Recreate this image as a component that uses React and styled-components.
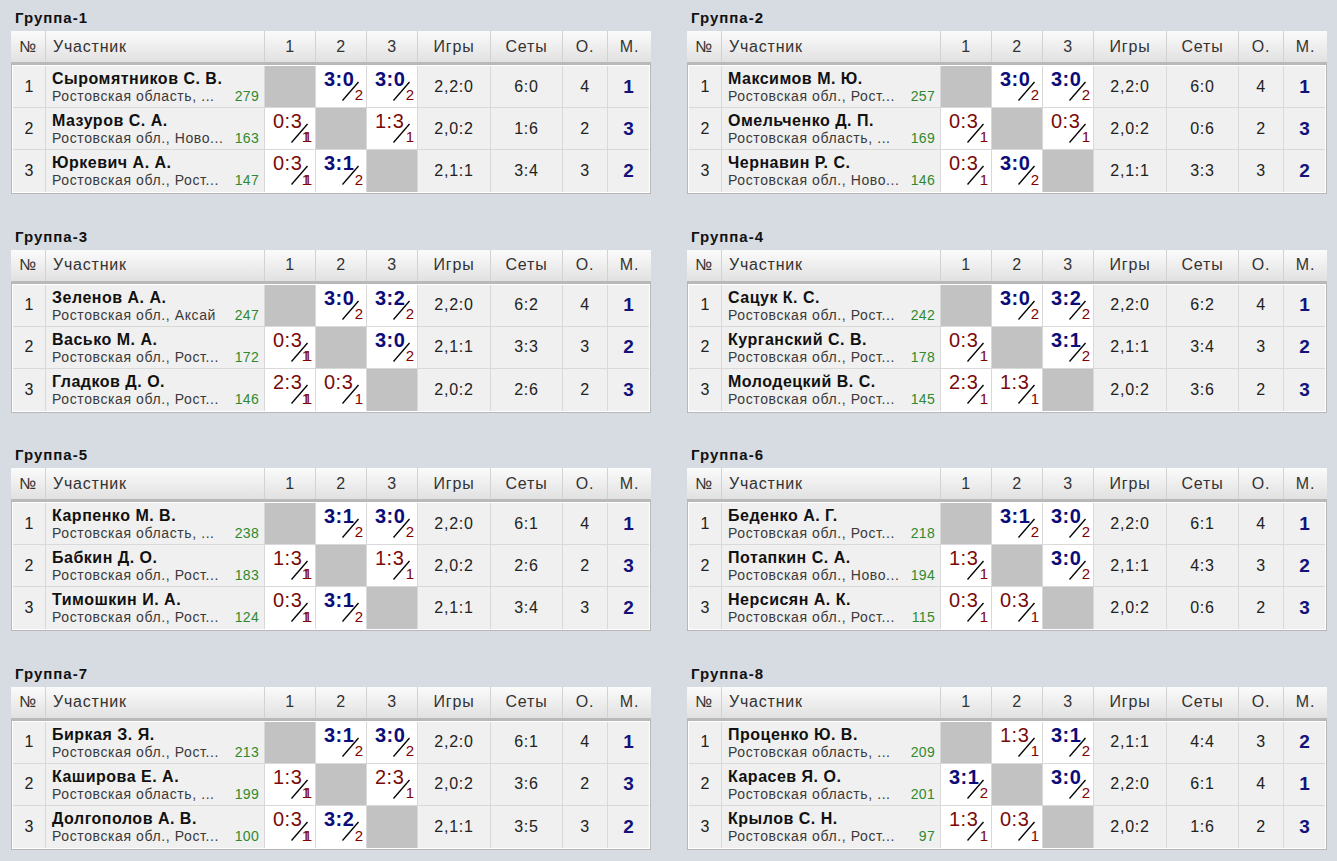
import styled, { createGlobalStyle } from "styled-components";

const GlobalStyle = createGlobalStyle`
  body {
    margin: 0;
    background: #d7dbe2;
    font-family: "Liberation Sans", Arial, sans-serif;
    color: #222;
  }
`;

// score format: "3:0/2", a trailing * marks the doubled point glyph
const groups = [
  {
    title: "Группа-1",
    rows: [
      ["Сыромятников С. В.", "Ростовская область, ...", 279, [null, "3:0/2", "3:0/2"], "2,2:0", "6:0", 4, 1],
      ["Мазуров С. А.", "Ростовская обл., Ново...", 163, ["0:3/1*", null, "1:3/1"], "2,0:2", "1:6", 2, 3],
      ["Юркевич А. А.", "Ростовская обл., Рост...", 147, ["0:3/1*", "3:1/2", null], "2,1:1", "3:4", 3, 2],
    ],
  },
  {
    title: "Группа-2",
    rows: [
      ["Максимов М. Ю.", "Ростовская обл., Рост...", 257, [null, "3:0/2", "3:0/2"], "2,2:0", "6:0", 4, 1],
      ["Омельченко Д. П.", "Ростовская область, ...", 169, ["0:3/1", null, "0:3/1"], "2,0:2", "0:6", 2, 3],
      ["Чернавин Р. С.", "Ростовская обл., Ново...", 146, ["0:3/1", "3:0/2", null], "2,1:1", "3:3", 3, 2],
    ],
  },
  {
    title: "Группа-3",
    rows: [
      ["Зеленов А. А.", "Ростовская обл., Аксай", 247, [null, "3:0/2", "3:2/2"], "2,2:0", "6:2", 4, 1],
      ["Васько М. А.", "Ростовская обл., Рост...", 172, ["0:3/1*", null, "3:0/2"], "2,1:1", "3:3", 3, 2],
      ["Гладков Д. О.", "Ростовская обл., Рост...", 146, ["2:3/1*", "0:3/1", null], "2,0:2", "2:6", 2, 3],
    ],
  },
  {
    title: "Группа-4",
    rows: [
      ["Сацук К. С.", "Ростовская обл., Рост...", 242, [null, "3:0/2", "3:2/2"], "2,2:0", "6:2", 4, 1],
      ["Курганский С. В.", "Ростовская обл., Рост...", 178, ["0:3/1", null, "3:1/2"], "2,1:1", "3:4", 3, 2],
      ["Молодецкий В. С.", "Ростовская обл., Рост...", 145, ["2:3/1", "1:3/1", null], "2,0:2", "3:6", 2, 3],
    ],
  },
  {
    title: "Группа-5",
    rows: [
      ["Карпенко М. В.", "Ростовская область, ...", 238, [null, "3:1/2", "3:0/2"], "2,2:0", "6:1", 4, 1],
      ["Бабкин Д. О.", "Ростовская обл., Рост...", 183, ["1:3/1*", null, "1:3/1"], "2,0:2", "2:6", 2, 3],
      ["Тимошкин И. А.", "Ростовская обл., Рост...", 124, ["0:3/1*", "3:1/2", null], "2,1:1", "3:4", 3, 2],
    ],
  },
  {
    title: "Группа-6",
    rows: [
      ["Беденко А. Г.", "Ростовская обл., Рост...", 218, [null, "3:1/2", "3:0/2"], "2,2:0", "6:1", 4, 1],
      ["Потапкин С. А.", "Ростовская обл., Ново...", 194, ["1:3/1", null, "3:0/2"], "2,1:1", "4:3", 3, 2],
      ["Нерсисян А. К.", "Ростовская обл., Рост...", 115, ["0:3/1", "0:3/1", null], "2,0:2", "0:6", 2, 3],
    ],
  },
  {
    title: "Группа-7",
    rows: [
      ["Биркая З. Я.", "Ростовская обл., Рост...", 213, [null, "3:1/2", "3:0/2"], "2,2:0", "6:1", 4, 1],
      ["Каширова Е. А.", "Ростовская область, ...", 199, ["1:3/1*", null, "2:3/1"], "2,0:2", "3:6", 2, 3],
      ["Долгополов А. В.", "Ростовская обл., Рост...", 100, ["0:3/1*", "3:2/2", null], "2,1:1", "3:5", 3, 2],
    ],
  },
  {
    title: "Группа-8",
    rows: [
      ["Проценко Ю. В.", "Ростовская область, ...", 209, [null, "1:3/1", "3:1/2"], "2,1:1", "4:4", 3, 2],
      ["Карасев Я. О.", "Ростовская область, ...", 201, ["3:1/2", null, "3:0/2"], "2,2:0", "6:1", 4, 1],
      ["Крылов С. Н.", "Ростовская обл., Рост...", 97, ["1:3/1", "0:3/1", null], "2,0:2", "1:6", 2, 3],
    ],
  },
];

const Page = styled.div`
  display: grid;
  grid-template-columns: 640px 640px;
  column-gap: 36px;
  row-gap: 32.6px;
  padding: 8px 0 20px 11px;
`;

const Group = styled.section`
  display: flex;
  flex-direction: column;
`;

const Title = styled.div`
  height: 20px;
  line-height: 20px;
  margin-bottom: 3px;
  padding-left: 4px;
  font-size: 15px;
  font-weight: bold;
  letter-spacing: 1px;
  color: #111;
`;

const HeadRow = styled.div`
  display: grid;
  grid-template-columns: 35px 219px 51px 51px 51px 73px 72px 45px 43px;
  height: 33px;
  box-sizing: border-box;
  background: linear-gradient(#fbfbfb, #e1e1e1);
  border-bottom: 2px solid #b9b9b9;
`;

const HeadCell = styled.div`
  display: flex;
  align-items: center;
  justify-content: ${({ $left }) => ($left ? "flex-start" : "center")};
  padding-left: ${({ $left }) => ($left ? "7px" : "0")};
  border-right: 1px solid #d2d2d2;
  font-size: 16px;
  letter-spacing: 0.8px;
  color: #333;

  &:last-child {
    border-right: none;
  }
`;

const Body = styled.div`
  border: 1px solid #b7b7b7;
  padding: 1px;
  background: #fff;
`;

const Row = styled.div`
  display: grid;
  grid-template-columns: 33px 219px 51px 51px 51px 73px 72px 45px 41px;
  height: 42px;

  & > * {
    box-sizing: border-box;
    border-right: 1px solid #d9d9d9;
    border-bottom: 1px solid #d9d9d9;
  }
  & > *:last-child {
    border-right: none;
  }
  &:last-child > * {
    border-bottom: none;
  }
`;

const NumCell = styled.div`
  display: flex;
  align-items: center;
  justify-content: center;
  background: #f0f0f0;
  font-size: 16px;
  color: #222;
`;

const PlayerCell = styled.div`
  display: flex;
  flex-direction: column;
  padding: 3px 5px 0 6px;
  background: #f0f0f0;
  white-space: nowrap;
`;

const Name = styled.div`
  font-size: 16px;
  line-height: 19px;
  font-weight: bold;
  letter-spacing: 0.5px;
  color: #111;
`;

const Sub = styled.div`
  display: flex;
  justify-content: space-between;
  align-items: baseline;
  font-size: 14px;
  line-height: 16px;
`;

const Location = styled.span`
  letter-spacing: 0.6px;
  color: #3a3a3a;
`;

const Rating = styled.span`
  letter-spacing: 0.3px;
  color: #2f8a2f;
`;

const ScoreCell = styled.div`
  position: relative;
  background: ${({ $self }) => ($self ? "#c2c2c2" : "#fff")};
  padding: 2px 0 0 8px;
`;

const ScoreText = styled.span`
  display: block;
  font-size: 20px;
  line-height: 22px;
  letter-spacing: 0.5px;
  font-weight: ${({ $win }) => ($win ? "bold" : "normal")};
  color: ${({ $win }) => ($win ? "#0c0c78" : "#7a0a0a")};
`;

const Slash = styled.svg`
  position: absolute;
  left: 26px;
  top: 15px;
`;

const Points = styled.span`
  position: absolute;
  right: 3px;
  bottom: 5px;
  font-size: 15px;
  line-height: 15px;
  color: #800000;
  text-shadow: ${({ $doubled }) => ($doubled ? "-2px 0 0 #800000" : "none")};
`;

const StatCell = styled.div`
  display: flex;
  align-items: center;
  justify-content: center;
  background: #f0f0f0;
  font-size: 16px;
  letter-spacing: 0.8px;
  color: #222;
`;

const PlaceCell = styled(StatCell)`
  font-size: 19px;
  font-weight: bold;
  letter-spacing: 0;
  color: #12127a;
`;

function Score({ value }) {
  if (!value) return <ScoreCell $self />;
  const doubled = value.endsWith("*");
  const [main, pts] = value.replace("*", "").split("/");
  const win = Number(main[0]) > Number(main[2]);
  return (
    <ScoreCell>
      <ScoreText $win={win}>{main}</ScoreText>
      <Slash width="17" height="20" viewBox="0 0 17 20">
        <line x1="0.5" y1="19.5" x2="16.5" y2="1" stroke="#000" strokeWidth="1.3" />
      </Slash>
      <Points $doubled={doubled}>{pts}</Points>
    </ScoreCell>
  );
}

const headers = ["№", "Участник", "1", "2", "3", "Игры", "Сеты", "О.", "М."];

function GroupTable({ title, rows }) {
  return (
    <Group>
      <Title>{title}</Title>
      <HeadRow>
        {headers.map((h) => (
          <HeadCell key={h} $left={h === "Участник"}>
            {h}
          </HeadCell>
        ))}
      </HeadRow>
      <Body>
        {rows.map(([name, loc, rating, scores, games, sets, pts, place], i) => (
          <Row key={name}>
            <NumCell>{i + 1}</NumCell>
            <PlayerCell>
              <Name>{name}</Name>
              <Sub>
                <Location>{loc}</Location>
                <Rating>{rating}</Rating>
              </Sub>
            </PlayerCell>
            {scores.map((s, j) => (
              <Score key={j} value={s} />
            ))}
            <StatCell>{games}</StatCell>
            <StatCell>{sets}</StatCell>
            <StatCell>{pts}</StatCell>
            <PlaceCell>{place}</PlaceCell>
          </Row>
        ))}
      </Body>
    </Group>
  );
}

export default function App() {
  return (
    <>
      <GlobalStyle />
      <Page>
        {groups.map((g) => (
          <GroupTable key={g.title} {...g} />
        ))}
      </Page>
    </>
  );
}
